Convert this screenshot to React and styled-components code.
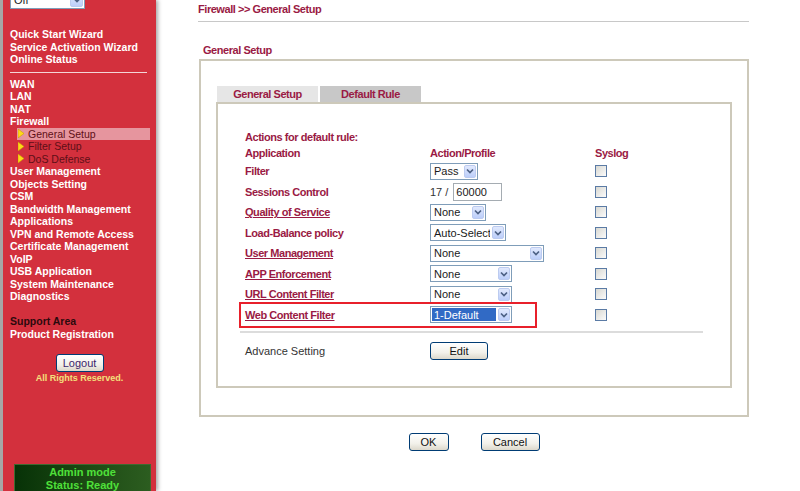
import React from 'react';
import styled, { createGlobalStyle } from 'styled-components';

const GlobalStyle = createGlobalStyle`
  html, body { margin: 0; padding: 0; background: #fff; }
  body {
    width: 800px;
    height: 491px;
    overflow: hidden;
    font-family: "Liberation Sans", Arial, sans-serif;
  }
`;

const Page = styled.div`
  display: flex;
  width: 800px;
  height: 491px;
  overflow: hidden;
`;

/* ---------- sidebar ---------- */

const Sidebar = styled.div`
  flex: none;
  width: 153px;
  height: 491px;
  background: #d3303d;
  border-left: 3px solid #a6a6a6;
  display: flex;
  flex-direction: column;
  box-shadow: 2px 0 4px rgba(0, 0, 0, 0.35);
  position: relative;
  z-index: 1;
`;

const TopSelect = styled.div`
  margin: -9px 0 0 7px;
  width: 75px;
  height: 18px;
  box-sizing: border-box;
  background: #fff;
  border: 1px solid #7f9db9;
  display: flex;
  align-items: stretch;
  padding: 1px;
  font-size: 11px;
  color: #222;
`;

const Menu = styled.div`
  margin-top: 19px;
  display: flex;
  flex-direction: column;
`;

const NavItem = styled.div`
  padding-left: 7px;
  height: 12.5px;
  line-height: 12.5px;
  font-size: 10.5px;
  font-weight: bold;
  color: ${(p) => (p.$dark ? '#2b0a0d' : '#fff')};
  white-space: nowrap;
`;

const NavSep = styled.div`
  height: 1px;
  width: 137px;
  margin: 6px 0 5px 7px;
  background: #f3d6d8;
`;

const NavGap = styled.div`
  height: 12.5px;
`;

const SubItem = styled.div`
  margin-left: 14px;
  width: 133px;
  height: 12.5px;
  display: flex;
  align-items: center;
  gap: 4px;
  padding-left: 1px;
  box-sizing: border-box;
  font-size: 10.5px;
  color: #5e0f17;
  background: ${(p) => (p.$active ? '#e6959e' : 'transparent')};
  white-space: nowrap;
`;

const LogoutWrap = styled.div`
  margin-top: 14px;
  display: flex;
  flex-direction: column;
  align-items: center;
`;

const Rights = styled.div`
  font-size: 9px;
  font-weight: bold;
  color: #f4e07c;
  line-height: 11px;
  margin-top: 1px;
`;

const StatusBox = styled.div`
  margin: auto 0 0 11px;
  width: 137px;
  height: 27px;
  padding-top: 1px;
  box-sizing: border-box;
  background: linear-gradient(90deg, #073207 0%, #1d4a14 55%, #2c5d20 100%);
  border: 1px solid #3e6a30;
  border-bottom: none;
  text-align: center;
  font-size: 11px;
  font-weight: bold;
  line-height: 13px;
  color: #4fe03a;
`;

/* ---------- main ---------- */

const Main = styled.div`
  flex: 1;
  padding-left: 42px;
  display: flex;
  flex-direction: column;
`;

const maroon = `
  font-size: 11px;
  font-weight: bold;
  letter-spacing: -0.45px;
  color: #9a1a44;
`;

const Crumb = styled.div`
  ${maroon}
  width: 551px;
  padding-top: 2px;
  line-height: 14px;
  padding-bottom: 5px;
  border-bottom: 1px solid #c8c8c8;
`;

const SectionTitle = styled.div`
  ${maroon}
  margin-top: 21px;
  padding-left: 5px;
  line-height: 14px;
`;

const OuterBox = styled.div`
  margin: 2px 0 0 1px;
  width: 550px;
  box-sizing: border-box;
  border: 2px solid #cdc9ba;
  padding: 25px 15px 27px 15px;
`;

const Tabs = styled.div`
  display: flex;
  gap: 2px;
  margin-left: 1px;
`;

const Tab = styled.div`
  ${maroon}
  width: 101px;
  height: 16px;
  line-height: 16px;
  text-align: center;
  background: ${(p) => (p.$active ? '#c8c8c8' : '#e6e6e6')};
`;

const InnerBox = styled.div`
  border: 2px solid #cdc9ba;
  padding: 25px 0 25px 27px;
`;

const TextLine = styled.div`
  ${maroon}
  height: 16px;
  line-height: 16px;
`;

const Grid = styled.div`
  display: grid;
  grid-template-columns: 185px 165px 1fr;
  align-items: center;
  height: ${(p) => p.$h || '20.5px'};
  position: relative;
`;

const Label = styled.span`
  ${maroon}
  text-decoration: ${(p) => (p.$link ? 'underline' : 'none')};
  white-space: nowrap;
`;

const PlainLabel = styled.span`
  font-size: 11px;
  color: #333;
  white-space: nowrap;
`;

const Mark = styled.div`
  position: absolute;
  left: -6px;
  top: -2.5px;
  width: 298px;
  height: 26px;
  box-sizing: border-box;
  border: 2px solid #e8202b;
  pointer-events: none;
`;

const SelectBox = styled.div`
  width: ${(p) => p.$w}px;
  height: 17px;
  box-sizing: border-box;
  border: 1px solid #7f9db9;
  background: #fff;
  display: flex;
  align-items: stretch;
  padding: 1px;
  font-size: 11px;
  color: #1a1a1a;
`;

const SelectValue = styled.div`
  flex: 1;
  display: flex;
  align-items: center;
  padding-left: 2px;
  margin-right: 2px;
  background: ${(p) => (p.$hl ? '#316ac5' : 'transparent')};
  color: ${(p) => (p.$hl ? '#fff' : '#1a1a1a')};
  white-space: nowrap;
  overflow: hidden;
`;

const SelectArrow = styled.div`
  width: ${(p) => p.$w || 12}px;
  box-sizing: border-box;
  border: 1px solid #bccbf0;
  border-radius: 2px;
  background: linear-gradient(#e1e9fd, #bccefa);
  display: flex;
  align-items: center;
  justify-content: center;
`;

const Inline = styled.div`
  display: flex;
  align-items: center;
  gap: 5px;
  font-size: 11px;
  color: #333;
`;

const TextInput = styled.div`
  width: 49px;
  height: 18px;
  box-sizing: border-box;
  border: 1px solid #a5acb2;
  font-size: 11px;
  color: #1a1a1a;
  padding-left: 2px;
  line-height: 16px;
`;

const Check = styled.div`
  width: 12px;
  height: 12px;
  box-sizing: border-box;
  border: 1px solid #5b7ba5;
  background: linear-gradient(135deg, #d8d8d2, #fbfbfb);
`;

const Rule = styled.div`
  height: 2px;
  background: #dcdcdc;
  margin: 6px 27px 8px -5px;
`;

const Button = styled.button`
  width: ${(p) => p.$w}px;
  height: 18px;
  padding: 0;
  box-sizing: border-box;
  border: 1px solid #003c74;
  border-radius: 3px;
  background: linear-gradient(#ffffff, #f2f1ea 60%, #dcd8cb);
  font-family: "Liberation Sans", Arial, sans-serif;
  font-size: 11px;
  color: ${(p) => p.$color || '#111'};
  cursor: default;
`;

const Actions = styled.div`
  width: 550px;
  margin-top: 16px;
  margin-left: 1px;
  display: flex;
  justify-content: center;
  gap: 32px;
`;

const Chevron = () => (
  <svg width="8" height="6" viewBox="0 0 8 6">
    <polyline points="1,1.5 4,4.5 7,1.5" fill="none" stroke="#4d6185" strokeWidth="1.7" />
  </svg>
);

const Tri = () => (
  <svg width="6" height="9" viewBox="0 0 6 9">
    <polygon points="0,0 6,4.5 0,9" fill="#ffd81a" stroke="#c9a400" strokeWidth="0.6" />
  </svg>
);

const Select = ({ w, value, hl }) => (
  <SelectBox $w={w}>
    <SelectValue $hl={hl}>{value}</SelectValue>
    <SelectArrow>
      <Chevron />
    </SelectArrow>
  </SelectBox>
);

const rows = [
  { label: 'Filter', ctl: <Select w={48} value="Pass" /> },
  {
    label: 'Sessions Control',
    ctl: (
      <Inline>
        17 / <TextInput>60000</TextInput>
      </Inline>
    ),
  },
  { label: 'Quality of Service', link: true, ctl: <Select w={56} value="None" /> },
  { label: 'Load-Balance policy', ctl: <Select w={76} value="Auto-Select" /> },
  { label: 'User Management', link: true, ctl: <Select w={114} value="None" /> },
  { label: 'APP Enforcement', link: true, ctl: <Select w={82} value="None" /> },
  { label: 'URL Content Filter', link: true, ctl: <Select w={82} value="None" /> },
  { label: 'Web Content Filter', link: true, mark: true, ctl: <Select w={82} value="1-Default" hl /> },
];

const menuTop = ['Quick Start Wizard', 'Service Activation Wizard', 'Online Status'];
const menuMid = ['WAN', 'LAN', 'NAT', 'Firewall'];
const menuRest = [
  'User Management',
  'Objects Setting',
  'CSM',
  'Bandwidth Management',
  'Applications',
  'VPN and Remote Access',
  'Certificate Management',
  'VoIP',
  'USB Application',
  'System Maintenance',
  'Diagnostics',
];

export default function App() {
  return (
    <Page>
      <GlobalStyle />
      <Sidebar>
        <TopSelect>
          <SelectValue>Off</SelectValue>
          <SelectArrow $w={13}>
            <Chevron />
          </SelectArrow>
        </TopSelect>
        <Menu>
          {menuTop.map((m) => (
            <NavItem key={m}>{m}</NavItem>
          ))}
          <NavSep />
          {menuMid.map((m) => (
            <NavItem key={m}>{m}</NavItem>
          ))}
          <SubItem $active>
            <Tri />
            General Setup
          </SubItem>
          <SubItem>
            <Tri />
            Filter Setup
          </SubItem>
          <SubItem>
            <Tri />
            DoS Defense
          </SubItem>
          {menuRest.map((m) => (
            <NavItem key={m}>{m}</NavItem>
          ))}
          <NavGap />
          <NavItem $dark>Support Area</NavItem>
          <NavItem>Product Registration</NavItem>
        </Menu>
        <LogoutWrap>
          <Button $w={48} $color="#3b1f6b">Logout</Button>
          <Rights>All Rights Reserved.</Rights>
        </LogoutWrap>
        <StatusBox>
          Admin mode
          <br />
          Status: Ready
        </StatusBox>
      </Sidebar>

      <Main>
        <Crumb>Firewall &gt;&gt; General Setup</Crumb>
        <SectionTitle>General Setup</SectionTitle>
        <OuterBox>
          <Tabs>
            <Tab>General Setup</Tab>
            <Tab $active>Default Rule</Tab>
          </Tabs>
          <InnerBox>
            <TextLine>Actions for default rule:</TextLine>
            <Grid $h="16px">
              <Label>Application</Label>
              <Label>Action/Profile</Label>
              <Label>Syslog</Label>
            </Grid>
            {rows.map((r) => (
              <Grid key={r.label}>
                <Label $link={r.link}>{r.label}</Label>
                {r.ctl}
                <Check />
                {r.mark && <Mark />}
              </Grid>
            ))}
            <Rule />
            <Grid $h="20px">
              <PlainLabel>Advance Setting</PlainLabel>
              <Button $w={58}>Edit</Button>
            </Grid>
          </InnerBox>
        </OuterBox>
        <Actions>
          <Button $w={40}>OK</Button>
          <Button $w={59}>Cancel</Button>
        </Actions>
      </Main>
    </Page>
  );
}
